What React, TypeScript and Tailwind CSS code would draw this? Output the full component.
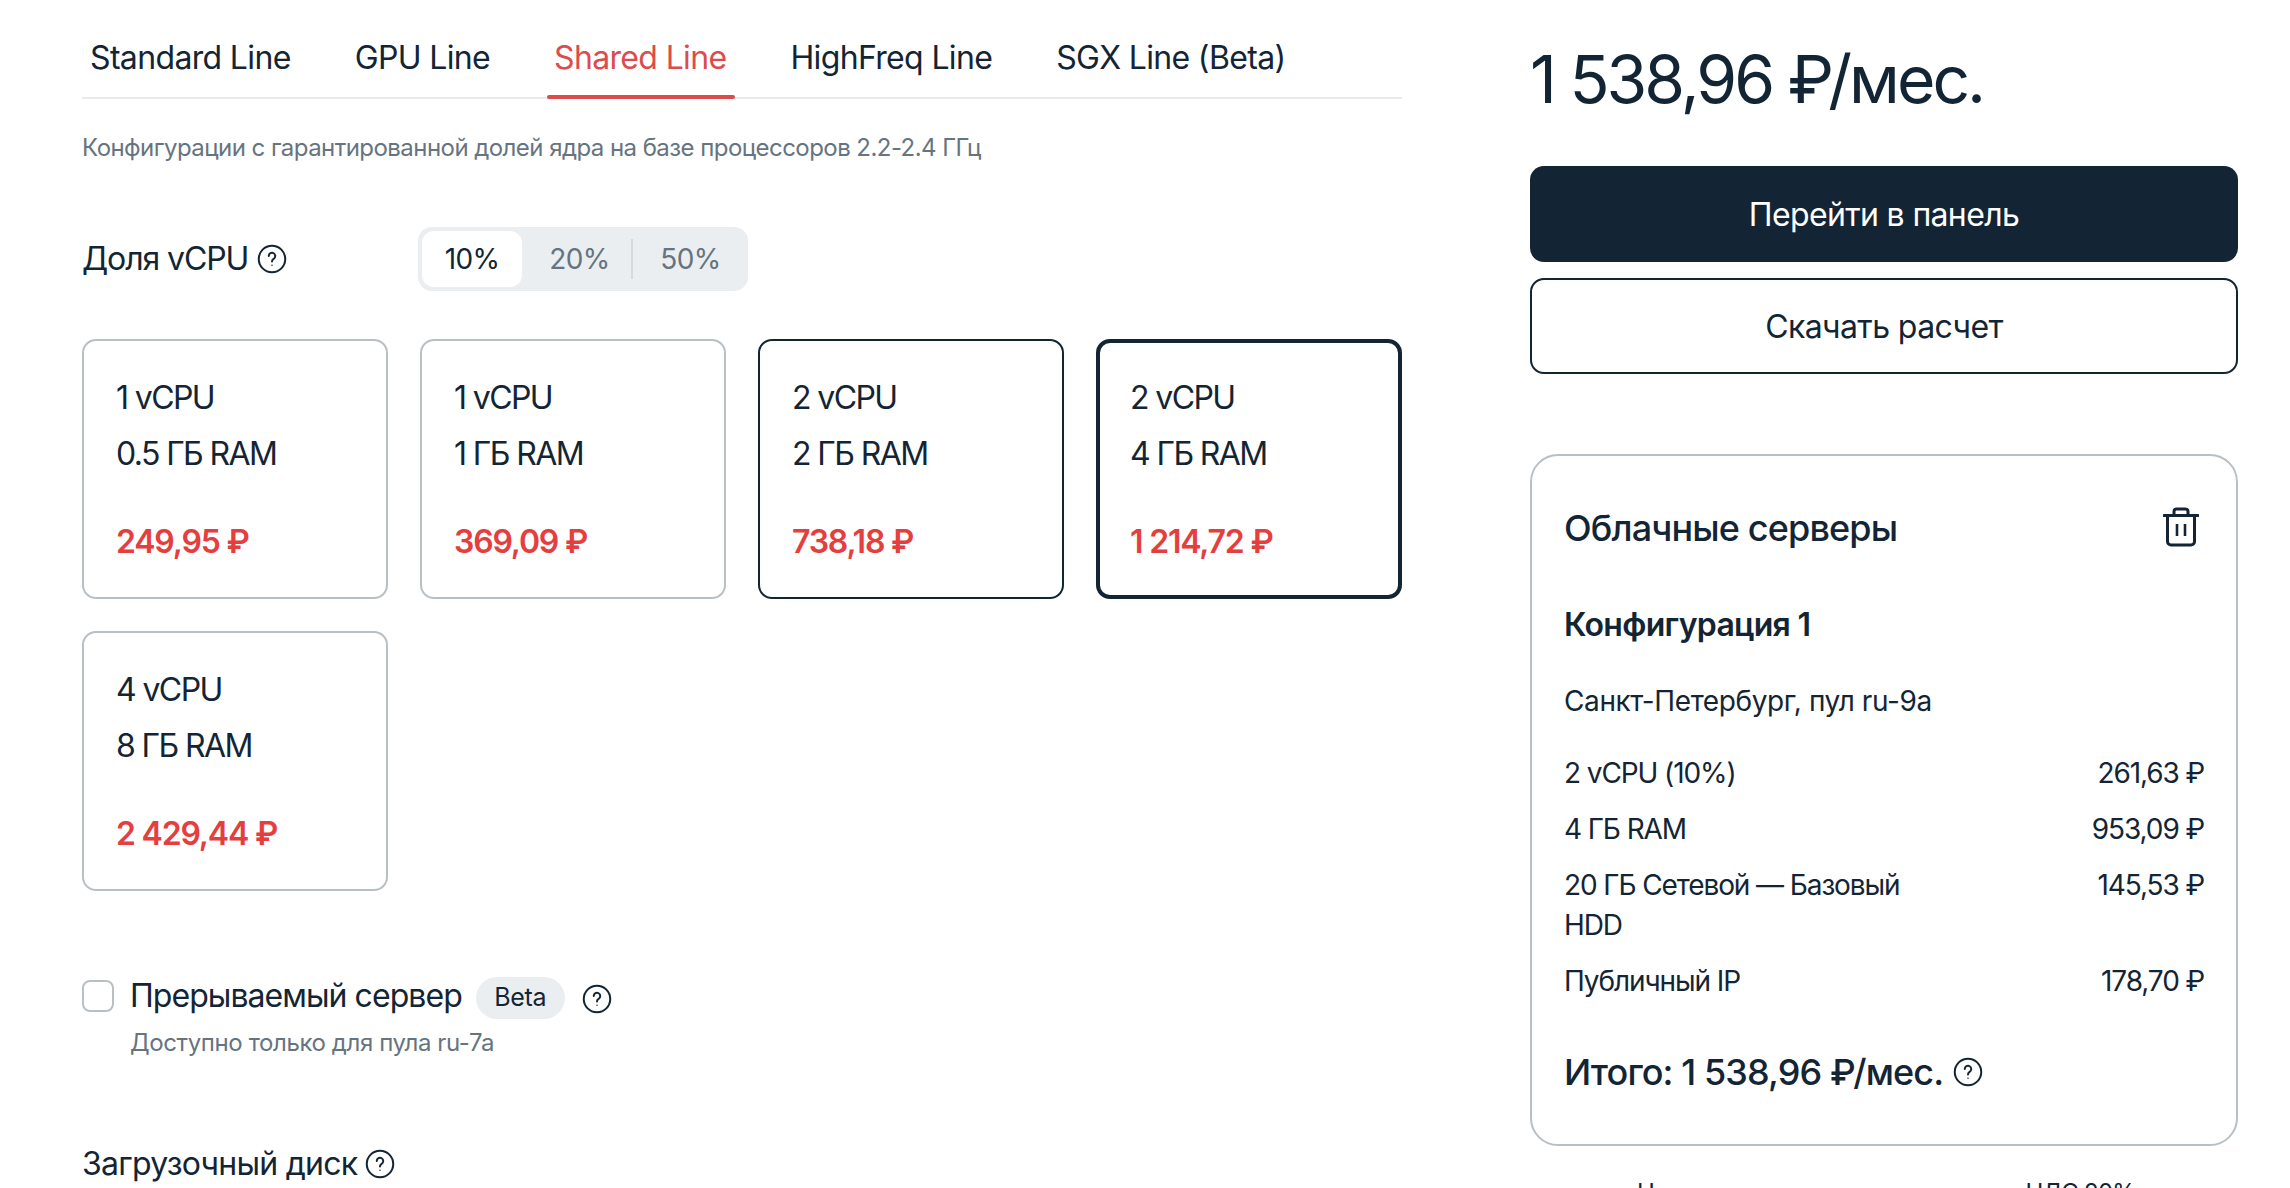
import { ReactNode } from 'react';

const tabs = ['Standard Line', 'GPU Line', 'Shared Line', 'HighFreq Line', 'SGX Line (Beta)'];

const configs = [
  { cpu: '1 vCPU', ram: '0.5 ГБ RAM', price: '249,95 ₽', state: 'idle' },
  { cpu: '1 vCPU', ram: '1 ГБ RAM', price: '369,09 ₽', state: 'idle' },
  { cpu: '2 vCPU', ram: '2 ГБ RAM', price: '738,18 ₽', state: 'hover' },
  { cpu: '2 vCPU', ram: '4 ГБ RAM', price: '1 214,72 ₽', state: 'active' },
  { cpu: '4 vCPU', ram: '8 ГБ RAM', price: '2 429,44 ₽', state: 'idle' },
];

const cardBorder: Record<string, string> = {
  idle: 'border-2 border-[#b8c0c6] pl-[32px] pt-[34px]',
  hover: 'border-2 border-[#132535] pl-[32px] pt-[34px]',
  active: 'border-4 border-[#132535] pl-[30px] pt-[32px]',
};

function Help({ size = 30 }: { size?: number }) {
  return (
    <svg width={size} height={size} viewBox="0 0 24 24" fill="none" stroke="#132535" strokeWidth="1.6" className="shrink-0">
      <circle cx="12" cy="12" r="10.6" />
      <path d="M9.4 9.6a2.6 2.6 0 1 1 3.9 2.3c-.8.5-1.3 1-1.3 2" strokeLinecap="round" />
      <circle cx="12" cy="17" r="0.6" fill="#132535" stroke="none" />
    </svg>
  );
}

function Trash() {
  return (
    <svg width="36" height="40" viewBox="0 0 36 40" fill="none" stroke="#132535" strokeWidth="3" strokeLinejoin="round" className="-mt-[2px]">
      <path d="M1 8.5h34" strokeLinecap="round" />
      <path d="M11 8V4.5A2.5 2.5 0 0 1 13.5 2h9A2.5 2.5 0 0 1 25 4.5V8" />
      <path d="M4.5 9v25.5A3.5 3.5 0 0 0 8 38h20a3.5 3.5 0 0 0 3.5-3.5V9" />
      <path d="M14 17v12M22 17v12" strokeWidth="2.6" />
    </svg>
  );
}

function Row({ label, price }: { label: ReactNode; price: string }) {
  return (
    <div className="flex justify-between gap-8 text-[28px] leading-[40px] tracking-[-1.1px]">
      <div className="w-[370px]">{label}</div>
      <div className="whitespace-nowrap">{price}</div>
    </div>
  );
}

export default function App() {
  return (
    <div className="h-[1188px] overflow-hidden bg-white text-[#132535] font-['Inter','Noto_Sans',sans-serif]">
      <div className="flex pl-[82px] pr-[52px] justify-between">
        <div className="w-[1320px]">
          {/* Tabs */}
          <div className="flex h-[99px] pl-[8px] gap-[64px] border-b-2 border-[#e9ecee]">
            {tabs.map(tab => (
              <div
                key={tab}
                className={`relative pt-[35px] text-[32px] leading-[46px] tracking-[-0.65px] whitespace-nowrap ${tab === 'Shared Line' ? 'text-[#dc4c4c]' : ''}`}
              >
                {tab}
                {tab === 'Shared Line' && (
                  <div className="absolute -left-[7px] -right-[9px] -bottom-[2px] h-[4px] rounded-full bg-[#dc4c4c]" />
                )}
              </div>
            ))}
          </div>

          <p className="mt-[32px] text-[24px] leading-[34px] tracking-[-0.55px] text-[#66747f]">
            Конфигурации с гарантированной долей ядра на базе процессоров 2.2-2.4 ГГц
          </p>

          {/* vCPU share */}
          <div className="mt-[62px] flex items-center h-[64px]">
            <div className="w-[336px] flex items-center gap-[9px] text-[32px] tracking-[-1.1px]">
              Доля vCPU <Help />
            </div>
            <div className="flex items-center w-[330px] h-[64px] p-[4px] rounded-[14px] bg-[#ebeef1] text-[28px] tracking-[-0.6px] text-[#66747f]">
              <div className="w-[100px] h-[56px] flex items-center justify-center rounded-[12px] bg-white text-[#132535]">10%</div>
              <div className="w-[111px] pl-[6px] flex items-center justify-center border-r-2 border-[#d5dade] h-[40px]">20%</div>
              <div className="flex-1 pl-[4px] flex items-center justify-center">50%</div>
            </div>
          </div>

          {/* Configurations */}
          <div className="mt-[48px] grid grid-cols-4 gap-[32px]">
            {configs.map((c, i) => (
              <div key={i} className={`h-[260px] rounded-[14px] ${cardBorder[c.state]}`}>
                <div className="text-[32px] leading-[46px] tracking-[-1.6px]">{c.cpu}</div>
                <div className="mt-[10px] text-[32px] leading-[46px] tracking-[-1.6px]">{c.ram}</div>
                <div className="mt-[42px] text-[32px] leading-[46px] tracking-[-1.2px] font-semibold text-[#e53e3e]">{c.price}</div>
              </div>
            ))}
          </div>

          {/* Interruptible */}
          <div className="mt-[84px] flex items-center h-[42px]">
            <div className="w-[32px] h-[32px] rounded-[8px] border-2 border-[#b8c0c6] mr-[16px]" />
            <span className="text-[32px] tracking-[-0.95px]">Прерываемый сервер</span>
            <span className="ml-[14px] mt-[3px] px-[16px] w-[89px] h-[42px] flex items-center justify-center rounded-full bg-[#ebeef1] text-[25px] tracking-[-0.3px]">Beta</span>
            <span className="ml-[17px] mt-[6px]"><Help /></span>
          </div>
          <p className="mt-[9px] ml-[48px] text-[24px] leading-[34px] tracking-[-0.4px] text-[#66747f]">Доступно только для пула ru-7a</p>

          <div className="mt-[81px] flex items-center gap-[8px] text-[32px] leading-[46px] tracking-[-0.75px]">
            Загрузочный диск <Help />
          </div>
        </div>

        {/* Summary */}
        <div className="w-[708px]">
          <div className="pt-[42px] text-[66px] leading-[74px] tracking-[-3px]">1 538,96 ₽/мес.</div>
          <button className="mt-[50px] w-full h-[96px] pt-[2px] rounded-[14px] bg-[#132535] text-white text-[32px] tracking-[-0.65px]">Перейти в панель</button>
          <button className="mt-[16px] w-full h-[96px] pt-[2px] rounded-[14px] border-2 border-[#132535] text-[32px] tracking-[-0.6px]">Скачать расчет</button>

          <div className="mt-[80px] h-[692px] rounded-[28px] border-2 border-[#b8c0c6] px-[32px] pt-[47px]">
            <div className="flex items-center justify-between pr-[5px]">
              <div className="text-[36px] leading-[50px] tracking-[-0.85px] font-medium">Облачные серверы</div>
              <Trash />
            </div>
            <div className="mt-[49px] text-[32px] leading-[46px] tracking-[-0.7px] font-semibold">Конфигурация 1</div>
            <div className="mt-[33px] text-[28px] leading-[40px] tracking-[-0.4px]">Санкт-Петербург, пул ru-9a</div>
            <div className="mt-[32px] flex flex-col gap-[16px]">
              <Row label="2 vCPU (10%)" price="261,63 ₽" />
              <Row label="4 ГБ RAM" price="953,09 ₽" />
              <Row label="20 ГБ Сетевой — Базовый HDD" price="145,53 ₽" />
              <Row label="Публичный IP" price="178,70 ₽" />
            </div>
            <div className="mt-[46px] flex items-center gap-[10px] text-[36px] leading-[50px] tracking-[-0.9px] font-medium">
              Итого: 1 538,96 ₽/мес. <Help size={30} />
            </div>
          </div>

          <div className="mt-[30px] flex justify-between pl-[107px] pr-[103px] text-[24px] leading-[34px] tracking-[-0.8px]">
            <span>Начисления указаны с учетом</span>
            <span>НДС 20%</span>
          </div>
        </div>
      </div>
    </div>
  );
}
